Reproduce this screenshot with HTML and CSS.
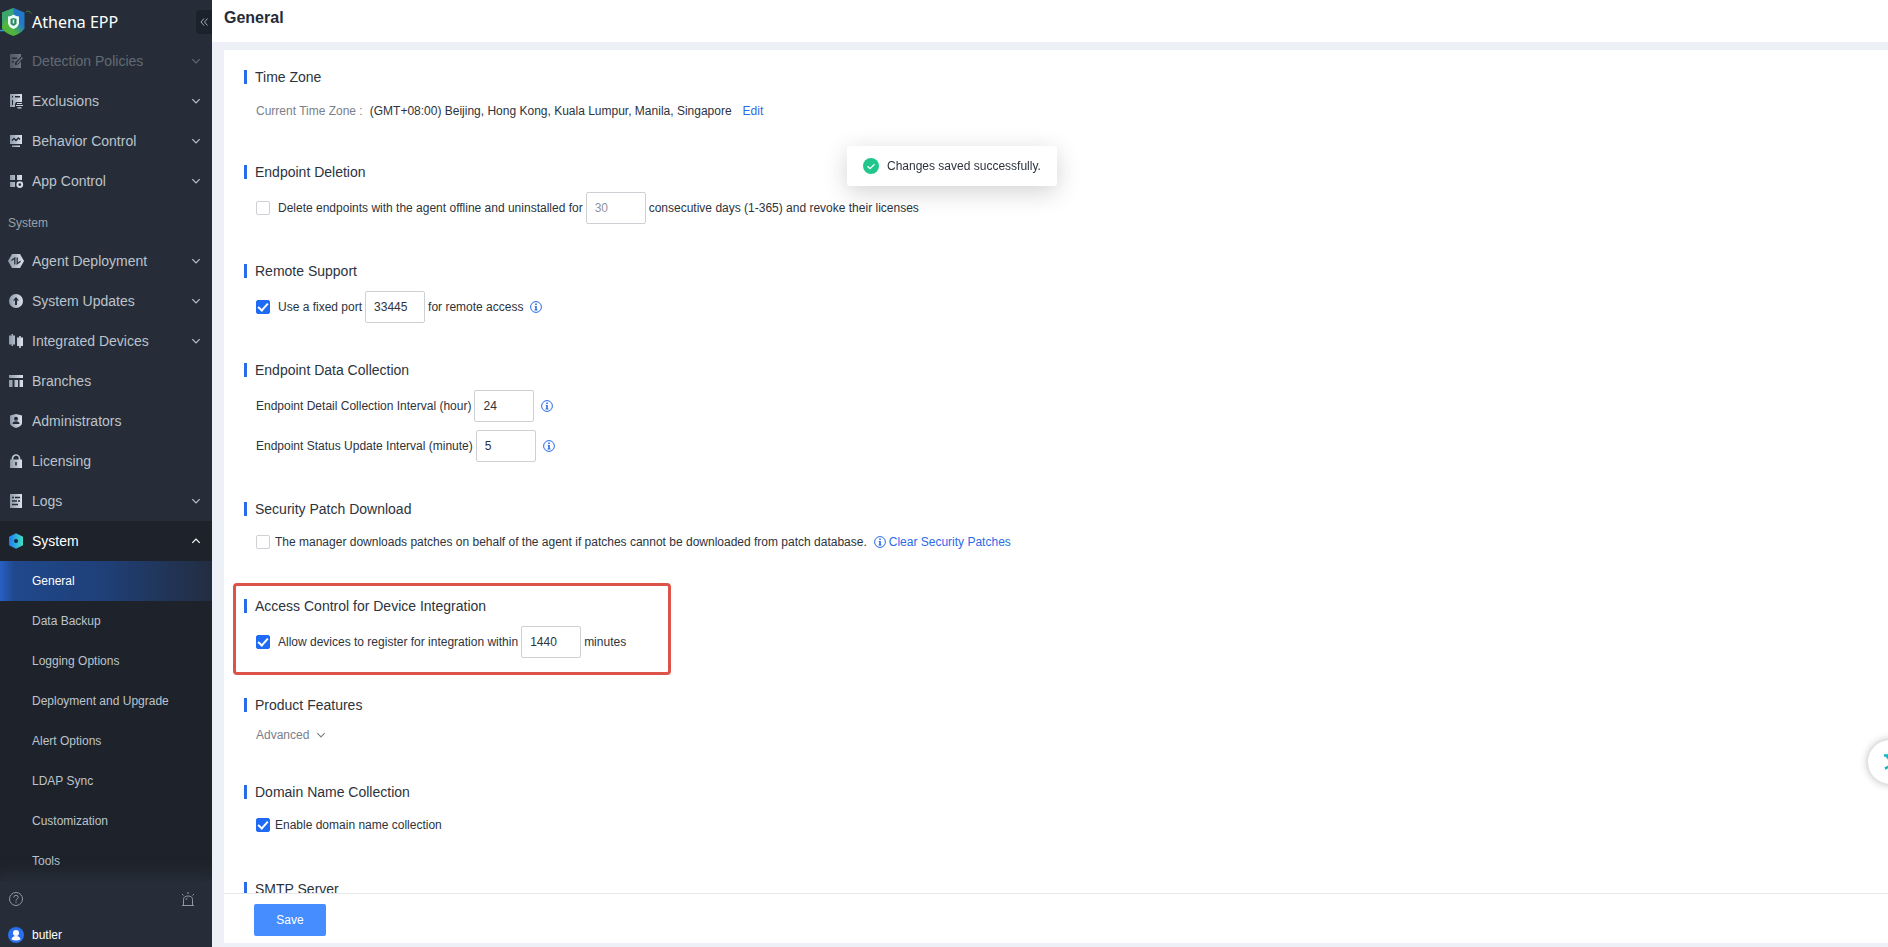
FILE: index.html
```html
<!DOCTYPE html>
<html lang="en">
<head>
    <meta charset="UTF-8">
    <meta name="viewport" content="width=device-width, initial-scale=1.0">
    <title>Athena EPP - General</title>
    <link rel="stylesheet" href="styles.css">
</head>
<body>

<!-- Shared gradients and symbols -->
<svg class="defs" width="0" height="0" aria-hidden="true">
    <defs>
        <linearGradient id="steel" x1="0" y1="0" x2="1" y2="0">
            <stop offset="0" stop-color="#8e99a8"/>
            <stop offset="1" stop-color="#dbe3ec"/>
        </linearGradient>
        <linearGradient id="aqua" x1="0" y1="0" x2="1" y2="0">
            <stop offset="0" stop-color="#1f7cf5"/>
            <stop offset="1" stop-color="#3fe0c0"/>
        </linearGradient>
        <linearGradient id="shield" x1="1" y1="0" x2="0" y2="1">
            <stop offset="0.35" stop-color="#2377c8"/>
            <stop offset="0.65" stop-color="#4fb53c"/>
        </linearGradient>
    </defs>
    <symbol id="chevron" viewBox="0 0 10 10">
        <path d="M1.300 3.200L5 6.900l3.700-3.700" fill="none" stroke="currentColor" stroke-width="1.200"/>
    </symbol>
    <symbol id="info" viewBox="0 0 12 12">
        <circle cx="6" cy="6" r="5.400" fill="none" stroke="currentColor"/>
        <path d="M5.200 2.600h1.600v1.500H5.200zM4.600 5h2.200v3.600h.7v.8H4.500v-.8h.7V5.800h-.6z" fill="currentColor"/>
    </symbol>
</svg>

<div class="layout">
    <aside class="sidebar">
        <div class="brand">
            <svg class="logo" viewBox="0 0 32 32">
                <path d="M26 6c2-1.500 4-.5 5.500 1.500" fill="none" stroke="#3f8f3a"/>
                <path d="M0 24.500h4" stroke="#2a9be0" stroke-width="1.500"/>
                <path d="M13.500 2l11 4.500v16q-3 4.500-11 7.500Q5 27 2 22.500v-16z" fill="url(#shield)"/>
                <path d="M13.500 2L2 6.500v14l5-9 6.500-3z" fill="#3ca66c"/>
                <path d="M13.500 8.500q2.500 2 5.500 2v7q-1 4-5.500 5.500Q9 21.500 8 17.500v-7q3 0 5.500-2z" fill="#e9fff4"/>
                <path d="M13.500 12l3 1v5l-3 2-3-2v-5z" fill="#2b8a63"/>
                <path d="M12.700 13.500h1.600v4h-1.600z" fill="#d9f7e8"/>
            </svg>
            <span class="brand-name">Athena EPP</span>
            <button class="collapse" type="button" aria-label="Collapse menu">
                <svg width="8" height="8" viewBox="0 0 8 8"><path d="M4 .5L1 4l3 3.500M7.500.5l-3 3.500 3 3.500" fill="none" stroke="currentColor"/></svg>
            </button>
        </div>

        <nav class="menu">
            <a class="menu-item faded" href="#">
                <svg class="icon" viewBox="0 0 14 14"><path fill="url(#steel)" fill-rule="evenodd" d="M1 0h11v2.500L7.500 7 6 8.500V11l3-.5 3-3V14H1zM3 3.500v1.500h5V3.500zM3 7v1.500h2V7z"/><path d="M13.500 3.500L8 9.500" stroke="#c3ccd6" stroke-width="1.500"/></svg>
                <span>Detection Policies</span>
                <svg class="arrow"><use href="#chevron"/></svg>
            </a>
            <a class="menu-item" href="#">
                <svg class="icon" viewBox="0 0 14 14"><path fill="url(#steel)" fill-rule="evenodd" d="M1 0h12v8H7l-1 2v3H1zM3 2v1.500h1V2zM6 2v1.500h5V2zM3 6v5h1V6z"/><path d="M8 9.500h5M7 11.500h7M8.500 13.800h4" stroke="#c9d2dc" stroke-width="1.200"/></svg>
                <span>Exclusions</span>
                <svg class="arrow"><use href="#chevron"/></svg>
            </a>
            <a class="menu-item" href="#">
                <svg class="icon" viewBox="0 0 14 14"><path fill="url(#steel)" d="M1 1h12v9H1zM3 11.500h8V13H3z"/><path d="M3 6.500l2-2 2 2 2.500-2.500 1.500 1.500" fill="none" stroke="#262d38" stroke-width="1.400"/></svg>
                <span>Behavior Control</span>
                <svg class="arrow"><use href="#chevron"/></svg>
            </a>
            <a class="menu-item" href="#">
                <svg class="icon" viewBox="0 0 14 14"><path fill="url(#steel)" d="M1 1h5v5H1zM8 1h5v5H8zM1 8h5v5H1z"/><circle cx="10.800" cy="10.600" r="2.400" fill="none" stroke="#d3dbe5" stroke-width="2"/></svg>
                <span>App Control</span>
                <svg class="arrow"><use href="#chevron"/></svg>
            </a>

            <div class="menu-label">System</div>

            <a class="menu-item" href="#">
                <svg class="icon" viewBox="0 0 14 14"><path fill="url(#steel)" d="M3 0h8l4 7-4 7H3L-1 7z"/><path d="M2.500 6.500L5.800 4v6.500M8.200 3.500v6.300l3.300-2.500" fill="none" stroke="#262d38" stroke-width="1.300"/></svg>
                <span>Agent Deployment</span>
                <svg class="arrow"><use href="#chevron"/></svg>
            </a>
            <a class="menu-item" href="#">
                <svg class="icon" viewBox="0 0 14 14"><circle cx="7" cy="7" r="7" fill="url(#steel)"/><path d="M7 3l3 3.500H8V11H6V6.500H4z" fill="#262d38"/></svg>
                <span>System Updates</span>
                <svg class="arrow"><use href="#chevron"/></svg>
            </a>
            <a class="menu-item" href="#">
                <svg class="icon" viewBox="0 0 14 14"><path fill="url(#steel)" d="M2.500 0h1.500v1.500H6v9H4V12H2.500v-1.500H0v-9h2.500zM10.200 2h1.600v1.500H14V12h-2.200v2h-1.600v-2H8V3.500h2.200z"/></svg>
                <span>Integrated Devices</span>
                <svg class="arrow"><use href="#chevron"/></svg>
            </a>
            <a class="menu-item" href="#">
                <svg class="icon" viewBox="0 0 14 14"><path fill="url(#steel)" d="M0 1h14v3H0zM0 6h3.500v7H0zM5.500 6H9v7H5.500zM10.500 6H14v7h-3.500z"/></svg>
                <span>Branches</span>
            </a>
            <a class="menu-item" href="#">
                <svg class="icon" viewBox="0 0 14 14"><path fill="url(#steel)" d="M7 0l6 1.500V9q0 3-6 5-6-2-6-5V1.500z"/><circle cx="7" cy="4.800" r="2" fill="#262d38"/><path d="M3.500 10q0-2.800 3.500-2.800t3.500 2.800z" fill="#262d38"/></svg>
                <span>Administrators</span>
            </a>
            <a class="menu-item" href="#">
                <svg class="icon" viewBox="0 0 14 14"><path d="M3.500 6V4.500a3.500 3.500 0 0 1 7 0V6" fill="none" stroke="#bcc6d1" stroke-width="1.700"/><path fill="url(#steel)" d="M1 5.500h12V14H1z"/><path d="M6.200 8h1.600v3.500H6.200z" fill="#262d38"/></svg>
                <span>Licensing</span>
            </a>
            <a class="menu-item" href="#">
                <svg class="icon" viewBox="0 0 14 14"><path fill="url(#steel)" d="M1 0h12v14H1z"/><path d="M3 3.500h2M6 3.500h5M3 7h5M9 7h2M3 10.500h6" stroke="#262d38" stroke-width="1.400"/></svg>
                <span>Logs</span>
                <svg class="arrow"><use href="#chevron"/></svg>
            </a>
            <div class="menu-group">
                <a class="menu-item open" href="#">
                    <svg class="icon" viewBox="0 0 14 14"><path fill="url(#aqua)" d="M7 -.8l7 3.600v8.400l-7 3.600-7-3.600V2.800z"/><circle cx="7" cy="7" r="2" fill="#16263c"/></svg>
                    <span>System</span>
                    <svg class="arrow up"><use href="#chevron"/></svg>
                </a>
                <a class="submenu-item active" href="#">General</a>
                <a class="submenu-item" href="#">Data Backup</a>
                <a class="submenu-item" href="#">Logging Options</a>
                <a class="submenu-item" href="#">Deployment and Upgrade</a>
                <a class="submenu-item" href="#">Alert Options</a>
                <a class="submenu-item" href="#">LDAP Sync</a>
                <a class="submenu-item" href="#">Customization</a>
                <a class="submenu-item" href="#">Tools</a>
            </div>
        </nav>

        <div class="sidebar-footer">
            <div class="footer-row">
                <button class="icon-btn" type="button" aria-label="Help">
                    <svg width="14" height="14" viewBox="0 0 14 14"><circle cx="7" cy="7" r="6.500" fill="none" stroke="currentColor"/><path d="M4.800 5.500q0-2.200 2.200-2.200t2.200 2q0 1-1.200 1.700-1 .6-1 1.800M7 9.800v1.400" fill="none" stroke="currentColor"/></svg>
                </button>
                <button class="icon-btn" type="button" aria-label="Alerts">
                    <svg width="14" height="14" viewBox="0 0 14 14"><path d="M1 13.500h12M2.500 13.500V7.500q0-3.500 4.500-3.500t4.500 3.500v6M5 8q0-1.500 1.500-2M7 0v2M1 2l1.500 1.500M13 2l-1.500 1.500" fill="none" stroke="currentColor"/></svg>
                </button>
            </div>
            <a class="user" href="#">
                <svg width="16" height="16" viewBox="0 0 16 16"><circle cx="8" cy="8" r="8" fill="#2a6ff0"/><circle cx="8" cy="6" r="3" fill="#fff"/><path d="M3.500 12.500Q4 9 8 9t4.500 3.500Q8 14.500 3.500 12.500z" fill="#fff"/></svg>
                <span>butler</span>
            </a>
        </div>
    </aside>

    <main class="main">
        <header class="page-header">
            <h1>General</h1>
        </header>

        <form class="panel">
            <div class="settings">
                <section class="section">
                    <h2>Time Zone</h2>
                    <div class="row row-text">
                        <span class="muted">Current Time Zone :</span>
                        <span class="zone">(GMT+08:00) Beijing, Hong Kong, Kuala Lumpur, Manila, Singapore</span>
                        <a class="link" href="#">Edit</a>
                    </div>
                </section>

                <section class="section">
                    <h2>Endpoint Deletion</h2>
                    <div class="row">
                        <input type="checkbox" id="delete_endpoints">
                        <label for="delete_endpoints">Delete endpoints with the agent offline and uninstalled for</label>
                        <input type="text" class="field" id="offline_days" value="30" aria-label="Days" disabled>
                        <label for="offline_days">consecutive days (1-365) and revoke their licenses</label>
                    </div>
                </section>

                <section class="section">
                    <h2>Remote Support</h2>
                    <div class="row">
                        <input type="checkbox" id="fixed_port" checked>
                        <label for="fixed_port">Use a fixed port</label>
                        <input type="text" class="field" id="remote_port" value="33445" aria-label="Port">
                        <label for="remote_port">for remote access</label>
                        <svg class="info"><use href="#info"/></svg>
                    </div>
                </section>

                <section class="section">
                    <h2>Endpoint Data Collection</h2>
                    <div class="row">
                        <label for="detail_interval">Endpoint Detail Collection Interval (hour)</label>
                        <input type="text" class="field" id="detail_interval" value="24">
                        <svg class="info"><use href="#info"/></svg>
                    </div>
                    <div class="row">
                        <label for="status_interval">Endpoint Status Update Interval (minute)</label>
                        <input type="text" class="field" id="status_interval" value="5">
                        <svg class="info"><use href="#info"/></svg>
                    </div>
                </section>

                <section class="section">
                    <h2>Security Patch Download</h2>
                    <div class="row row-check">
                        <input type="checkbox" id="patches">
                        <label for="patches">The manager downloads patches on behalf of the agent if patches cannot be downloaded from patch database.</label>
                        <svg class="info"><use href="#info"/></svg>
                        <a class="link" href="#">Clear Security Patches</a>
                    </div>
                </section>

                <section class="section highlighted">
                    <h2>Access Control for Device Integration</h2>
                    <div class="row">
                        <input type="checkbox" id="allow_devices" checked>
                        <label for="allow_devices">Allow devices to register for integration within</label>
                        <input type="text" class="field" id="register_minutes" value="1440" aria-label="Minutes">
                        <label for="register_minutes">minutes</label>
                    </div>
                </section>

                <section class="section">
                    <h2>Product Features</h2>
                    <button class="advanced" type="button">Advanced <svg class="arrow"><use href="#chevron"/></svg></button>
                </section>

                <section class="section">
                    <h2>Domain Name Collection</h2>
                    <div class="row row-check">
                        <input type="checkbox" id="domain_collection" checked>
                        <label for="domain_collection">Enable domain name collection</label>
                    </div>
                </section>

                <section class="section">
                    <h2>SMTP Server</h2>
                </section>
            </div>

            <div class="actions">
                <button class="btn" type="submit">Save</button>
            </div>
        </form>
    </main>
</div>

<div class="toast" role="status">
    <svg width="16" height="16" viewBox="0 0 16 16"><circle cx="8" cy="8" r="8" fill="#20c68b"/><path d="M4.500 8.200l2.500 2.500 4.500-4.500" fill="none" stroke="#fff" stroke-width="1.300"/></svg>
    <span>Changes saved successfully.</span>
</div>

<button class="float-btn" type="button" aria-label="Translate">
    <svg width="14" height="16" viewBox="0 0 14 16"><path d="M0 1.500h13M3 2.500l4 5M11 2.500Q8 12 1 14.500M7 9l6 6" fill="none" stroke="#14b5c4" stroke-width="2.400"/></svg>
</button>

</body>
</html>
```

FILE: styles.css
```css
*,
*::before,
*::after {
    box-sizing: border-box;
}

body {
    font-family: "Liberation Sans", Arial, sans-serif;
    font-size: 12px;
    line-height: 20px;
    margin: 0;
    color: #2d333d;
    background-color: #edf0f7;
    overflow: hidden;
}

a {
    color: inherit;
    text-decoration: none;
}

button,
input {
    font-family: inherit;
    font-size: 12px;
    margin: 0;
}

svg {
    flex-shrink: 0;
}

.defs {
    position: absolute;
}

.layout {
    display: flex;
    height: 100vh;
}

/* Sidebar */
.sidebar {
    width: 212px;
    flex-shrink: 0;
    display: flex;
    flex-direction: column;
    background-color: #262d38;
    color: #bcc3cc;
    overflow: hidden;
}

.brand {
    display: flex;
    align-items: center;
    height: 41px;
    padding-top: 3px;
}

.logo {
    width: 32px;
    height: 32px;
}

.brand-name {
    flex: 1;
    font-family: "Noto Sans", sans-serif;
    font-size: 16px;
    color: #fff;
}

.collapse {
    display: flex;
    align-items: center;
    justify-content: center;
    width: 16px;
    height: 24px;
    padding: 0;
    border: none;
    border-radius: 4px 0 0 4px;
    background-color: #1c222b;
    color: #a3abb6;
}

.menu {
    flex: 1;
    min-height: 0;
    overflow: hidden;
}

.menu-item {
    display: flex;
    align-items: center;
    gap: 9px;
    height: 40px;
    padding: 0 11px 0 9px;
    font-size: 14px;
}

.menu-item span {
    flex: 1;
}

.menu-item.faded {
    opacity: 0.4;
}

.menu-item.open {
    color: #fff;
}

.icon {
    width: 14px;
    height: 14px;
    overflow: visible;
}

.arrow {
    width: 10px;
    height: 10px;
}

.arrow.up {
    transform: rotate(180deg);
}

.menu-label {
    height: 40px;
    line-height: 44px;
    padding-left: 8px;
    color: #98a0ab;
}

.menu-group {
    background-color: #1e232b;
}

.submenu-item {
    display: block;
    line-height: 40px;
    padding-left: 32px;
}

.submenu-item.active {
    color: #fff;
    background: linear-gradient(90deg, #2860c4 0, #20488c 14px, #1f3f77 50%, #232d40 100%);
}

.sidebar-footer {
    display: flex;
    flex-direction: column;
    gap: 12px;
    padding: 6px 16px 0 8px;
    box-shadow: 0 -4px 12px 4px #262d38;
}

.footer-row,
.user {
    display: flex;
    align-items: center;
    height: 24px;
}

.footer-row {
    justify-content: space-between;
}

.user {
    gap: 8px;
    color: #fff;
}

.icon-btn {
    display: flex;
    padding: 1px;
    border: none;
    background: none;
    color: #8f97a3;
}

/* Content */
.main {
    flex: 1;
    min-width: 0;
    display: flex;
    flex-direction: column;
}

.page-header {
    height: 42px;
    padding: 8px 12px;
    background-color: #fff;
}

.page-header h1 {
    margin: 0;
    font-size: 16px;
    line-height: 20px;
    color: #252b3a;
}

.panel {
    flex: 1;
    min-height: 0;
    display: flex;
    flex-direction: column;
    margin: 8px 0 4px 12px;
    background-color: #fff;
}

.settings {
    flex: 1;
    min-height: 0;
    padding: 17px 20px 0;
    overflow: hidden;
}

.section {
    position: relative;
    padding-bottom: 37px;
}

.section h2 {
    display: flex;
    align-items: center;
    gap: 8px;
    margin: 0 0 10px;
    font-size: 14px;
    font-weight: normal;
    line-height: 20px;
}

.section h2::before {
    content: "";
    width: 3px;
    height: 14px;
    background-color: #2a6be8;
}

/* Red frame around the section */
.highlighted::after {
    content: "";
    position: absolute;
    top: -13px;
    left: -11px;
    width: 438px;
    height: 92px;
    border: 3px solid #de5347;
    border-radius: 4px;
    pointer-events: none;
}

.row {
    display: flex;
    align-items: center;
    gap: 3px;
    height: 32px;
    padding-left: 12px;
}

.row + .row {
    margin-top: 8px;
}

.row-text {
    height: 28px;
}

.row-check {
    height: 26px;
    margin-bottom: 4px;
}

.muted {
    color: #7a808a;
}

.zone {
    margin: 0 8px 0 4px;
}

.link {
    color: #2a6be8;
}

.info {
    width: 12px;
    height: 12px;
    margin-left: 4px;
    color: #2a6be8;
}

input[type="checkbox"] {
    appearance: none;
    position: relative;
    width: 14px;
    height: 14px;
    border: 1px solid #cdd0d5;
    border-radius: 2px;
    background-color: #fff;
}

.row input[type="checkbox"] {
    margin-right: 5px;
}

.row-check input[type="checkbox"] {
    margin-right: 2px;
}

input[type="checkbox"]:checked {
    border-color: #1f6bf5;
    background-color: #1f6bf5;
}

input[type="checkbox"]:checked::after {
    content: "";
    position: absolute;
    top: 0;
    left: 3px;
    width: 6px;
    height: 10px;
    border: solid #fff;
    border-width: 0 2px 2px 0;
    transform: rotate(42deg);
}

.field {
    width: 60px;
    height: 32px;
    padding: 0 8px;
    border: 1px solid #cdd0d5;
    border-radius: 2px;
    background-color: #fff;
    color: #2d333d;
}

.field:disabled {
    color: #91959c;
}

.advanced {
    display: flex;
    align-items: center;
    gap: 7px;
    height: 20px;
    padding: 0 0 0 12px;
    border: none;
    background: none;
    color: #7a808a;
}

.actions {
    height: 50px;
    padding: 10px 30px;
    border-top: 1px solid #e6e8ed;
}

.btn {
    width: 72px;
    height: 32px;
    border: none;
    border-radius: 2px;
    background-color: #468dff;
    color: #fff;
    cursor: pointer;
}

.toast {
    position: fixed;
    top: 146px;
    left: 847px;
    display: flex;
    align-items: center;
    gap: 8px;
    height: 40px;
    padding: 0 16px;
    border-radius: 3px;
    background-color: #fff;
    box-shadow: 0 6px 24px rgba(0, 0, 0, 0.18);
}

.float-btn {
    position: fixed;
    top: 740px;
    right: -24px;
    display: flex;
    align-items: center;
    width: 44px;
    height: 44px;
    padding: 0 0 0 16px;
    border: none;
    border-radius: 50%;
    background-color: #fff;
    box-shadow: 0 0 8px rgba(0, 0, 0, 0.3);
}
```
